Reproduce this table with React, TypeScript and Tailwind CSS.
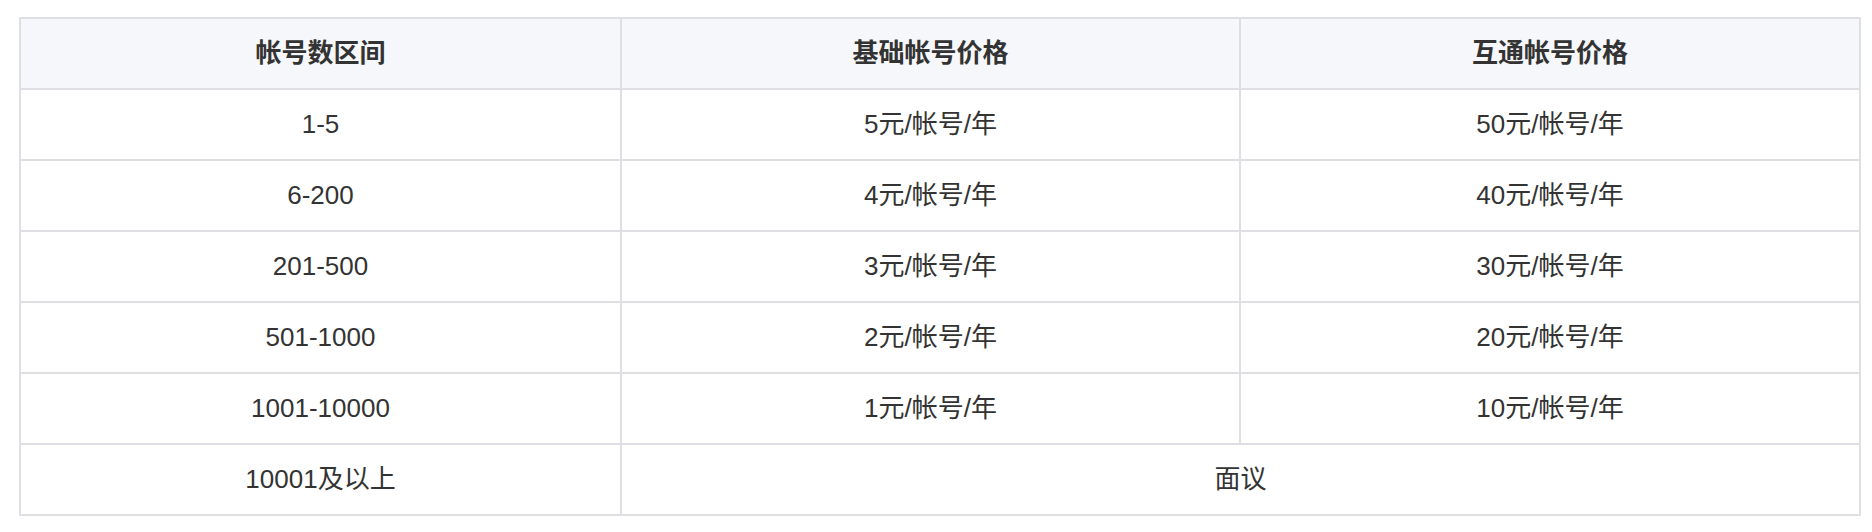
const rows = [
  { range: '1-5', basic: '5元/帐号/年', connect: '50元/帐号/年' },
  { range: '6-200', basic: '4元/帐号/年', connect: '40元/帐号/年' },
  { range: '201-500', basic: '3元/帐号/年', connect: '30元/帐号/年' },
  { range: '501-1000', basic: '2元/帐号/年', connect: '20元/帐号/年' },
  { range: '1001-10000', basic: '1元/帐号/年', connect: '10元/帐号/年' },
]

const cell = 'h-[71px] border-2 border-[#dddfe3] text-center align-middle'

export default function App() {
  return (
    <div
      className="min-h-[532px] bg-white pt-[17px] pl-[19px] text-[26px] text-[#333333]"
      style={{ fontFamily: '"Liberation Sans", "Noto Sans CJK SC", sans-serif' }}
    >
      <table className="w-[1840px] table-fixed border-collapse">
        <colgroup>
          <col className="w-[601px]" />
          <col className="w-[619px]" />
          <col className="w-[620px]" />
        </colgroup>
        <thead>
          <tr className="bg-[#f6f7fa]">
            <th className={`${cell} font-bold`}>帐号数区间</th>
            <th className={`${cell} font-bold`}>基础帐号价格</th>
            <th className={`${cell} font-bold`}>互通帐号价格</th>
          </tr>
        </thead>
        <tbody>
          {rows.map((r) => (
            <tr key={r.range}>
              <td className={cell}>{r.range}</td>
              <td className={cell}>{r.basic}</td>
              <td className={cell}>{r.connect}</td>
            </tr>
          ))}
          <tr>
            <td className={cell}>10001及以上</td>
            <td className={cell} colSpan={2}>
              面议
            </td>
          </tr>
        </tbody>
      </table>
    </div>
  )
}
